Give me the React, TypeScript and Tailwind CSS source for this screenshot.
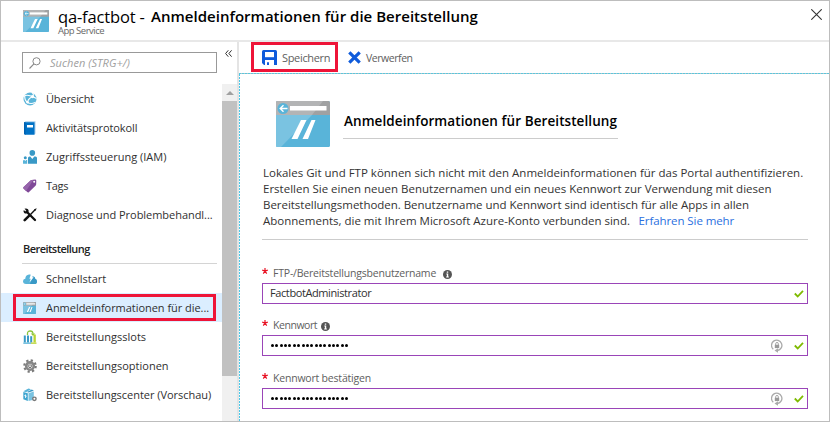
import type { ReactNode } from "react";

function WindowIcon({ className }: { className: string }) {
  return (
    <svg viewBox="0 0 54 46" preserveAspectRatio="none" className={className}>
      <rect width="54" height="46" rx="1.5" fill="#59b4d9" />
      <path d="M0 14V1.5Q0 0 1.5 0H52.5Q54 0 54 1.5V14Z" fill="#a0a1a2" />
      <path d="M0 14V1.5Q0 0 1.5 0H47L36 14Z" fill="#b3b4b5" />
      <path d="M0 14H36L5 46H1.5Q0 46 0 44.5Z" fill="#7ac3e1" />
      <rect x="14" y="5" width="36.500" height="4.500" fill="#fff" />
      <circle cx="7" cy="7.500" r="5.500" fill="#59b4d9" />
      <path d="M11.500 7.500H4.500M7.500 4.200L4.200 7.500L7.500 10.800" fill="none" stroke="#fff" strokeWidth="1.400" />
      <path d="M25 19H30.500L21.500 38H15.500ZM35.500 19H39.500L32 38H26.500Z" fill="#fff" />
    </svg>
  );
}

const GlobeIcon = () => (
  <svg viewBox="0 0 14 14" className="size-[14px]">
    <circle cx="7" cy="7" r="6.500" fill="#59b4d9" />
    <path d="M1 4.500C3 2 6 3.500 9.500 4.500M9.500 4.500C11 3 10.500 1.500 9 .8M9.500 4.500L13.500 6.500M9.500 4.500C6.500 6 4.500 8 4.500 11M4.500 10.500C2.500 9 1.500 7 1.800 4M4.500 10.500C7 12 10 11.500 12 10.500" fill="none" stroke="#fff" strokeWidth="1.100" />
    <circle cx="9.500" cy="4.600" r="1.600" fill="#fff" />
    <circle cx="4.600" cy="10.300" r="1.300" fill="#fff" />
  </svg>
);

const BookIcon = () => (
  <svg viewBox="0 0 14 14" className="size-[14px]">
    <path d="M1 1.500L2.500 .3H12.500V12.500L11.500 13.500Z" fill="#a8cdea" />
    <path d="M1 1.200H11.500V13.800H2L1 12.800Z" fill="#0072c6" />
    <path d="M1 1.200H2.500V13.800H2L1 12.800Z" fill="#0060b0" />
    <rect x="4" y="4" width="6" height="2.500" fill="#fff" />
  </svg>
);

const PeopleIcon = () => (
  <svg viewBox="0 0 14 14" className="size-[14px]">
    <circle cx="9.300" cy="2.900" r="2.800" fill="#3999c6" />
    <path d="M5 13.800V8Q5 6.500 6.500 6.500H7.300L9.300 9L11.300 6.500H12.500Q14 6.500 14 8V13.800Z" fill="#3999c6" />
    <circle cx="2.300" cy="7.700" r="1.500" fill="#3999c6" />
    <path d="M0 13.800V11Q0 10 1 10H1.400L2.300 11L3.200 10H4.200V13.800Z" fill="#59b4d9" />
  </svg>
);

const TagIcon = () => (
  <svg viewBox="0 0 14 14" className="size-[14px]">
    <path d="M.4 8.300L7.500 1.500Q8 1 9 .9L12 .5Q13.300 .5 13.300 1.800L13.200 5Q13.200 6 12.500 6.700L5.800 13.200Q5 13.800 4.200 13L.5 9.600Q0 9 .4 8.300Z" fill="#804998" />
    <path d="M.4 8.300L7.500 1.500Q8 1 9 .9L10.500 .7L3 11.900L.5 9.600Q0 9 .4 8.300Z" fill="#9664ab" />
    <circle cx="11.200" cy="2.800" r="1" fill="#fff" />
  </svg>
);

const ToolsIcon = () => (
  <svg viewBox="0 0 14 14" className="size-[14px]">
    <path d="M3.500 3.500L12 12" stroke="#111" strokeWidth="2.300" strokeLinecap="round" />
    <path d="M1.500 .8L3.500 2.700L2.700 3.700L.8 2Q0 4 1.300 5.100Q2.500 6 4 5.300L5.500 4Q6 2.500 5 1.300Q3.500 0 1.500 .8Z" fill="#111" />
    <path d="M12.300 1.500L7.500 6.500" stroke="#111" strokeWidth="1.300" />
    <path d="M6 7.800L1.700 12.200" stroke="#111" strokeWidth="2.500" strokeLinecap="round" />
    <path d="M11 1.800L13.200 .3L13.600 .8L12.200 3Z" fill="#111" />
  </svg>
);

const CloudIcon = () => (
  <svg viewBox="0 0 14 14" className="size-[14px]">
    <path d="M3 12Q0 11.800 0 9.300Q0 7 2.300 6.700Q2.500 3 6 2.500Q8.800 2 10 4.500Q12 4.500 12.200 6.800Q14 7.300 14 9.400Q13.900 12 11.200 12Z" fill="#59b4d9" />
    <path d="M10 4.500Q12 4.500 12.200 6.800Q14 7.300 14 9.400Q13.900 12 11.200 12H7Z" fill="#3999c6" />
    <path d="M8 2H10.300L9.200 5.200H10.600L6.500 10.500L7.700 6.700H6.400Z" fill="#fff" />
  </svg>
);

const SlotsIcon = () => (
  <svg viewBox="0 0 14 14" className="size-[14px]">
    <path d="M4.500 5V3.500Q4.500 1 7.200 1T10 3.800" fill="none" stroke="#8cc63e" strokeWidth="1.300" />
    <path d="M7.800 3.500H12.200L10 6Z" fill="#8cc63e" />
    <rect x=".8" y="5.500" width="2" height="7" fill="#3999c6" />
    <rect x="4" y="5.500" width="2" height="7" fill="#3999c6" />
    <rect x="7.200" y="6.200" width="2" height="6.300" fill="#3999c6" />
    <rect x="10.500" y="4.500" width="2.300" height="8" fill="#b8d432" />
    <path d="M.3 12.500H8V13.800H.3Z" fill="#59b4d9" />
    <path d="M8 12.500H13.500V13.800H8Z" fill="#b8d432" />
  </svg>
);

const GearIcon = () => (
  <svg viewBox="0 0 14 14" className="size-[14px]">
    <circle cx="7" cy="7" r="5.700" fill="none" stroke="#7a7a7a" strokeWidth="2.200" strokeDasharray="2.200 2.277" />
    <circle cx="7" cy="7" r="3.800" fill="none" stroke="#868686" strokeWidth="2.600" />
    <path d="M7 4V7.500M5.200 5.300Q4.300 8.500 7 8.800Q9.500 8.500 8.800 5.300" fill="none" stroke="#6f6f6f" strokeWidth="1" />
  </svg>
);

const CenterIcon = () => (
  <svg viewBox="0 0 14 14" className="size-[14px]">
    <path d="M.3 4L4.800 5.200V13L.3 11.200Z" fill="#3fa5d0" />
    <path d="M.3 3.300L5.500 .4L8 1.200L3 4.200Z" fill="#59b4d9" />
    <path d="M5.500 5.200L10.800 3.500V8.500L9.500 12L5.500 13Z" fill="#7ac3e1" />
    <path d="M5.500 4.500L10.800 2.800L8.900 1.500L4 4.100Z" fill="#3999c6" />
    <path d="M1.300 7.500L3.800 8.300M2.500 6.500V10" stroke="#fff" strokeWidth=".8" />
    <circle cx="11.400" cy="10.800" r="1.700" fill="#fff" stroke="#777" strokeWidth="1.400" />
  </svg>
);

function NavItem({ icon, label, selected, tracking = "" }: { icon: ReactNode; label: string; selected?: boolean; tracking?: string }) {
  return (
    <li className={`relative flex h-[29px] items-center gap-[9px] pl-[22px] ${selected ? "bg-[#dbeeff]" : ""}`}>
      <span className="flex size-[14px] shrink-0 items-center">{icon}</span>
      <span className={`text-[11px] leading-[16px] whitespace-nowrap text-[#303030] ${tracking}`}>{label}</span>
      {selected && <span className="absolute top-[1px] left-[12px] h-[27px] w-[203px] border-[3px] border-[#ee1438]" />}
    </li>
  );
}

const InfoIcon = () => (
  <svg viewBox="0 0 10 10" className="size-[9px]">
    <circle cx="5" cy="5" r="5" fill="#555" />
    <path d="M4.200 1.600H5.800V3H4.200ZM3.700 4H5.800V7.300H6.500V8.200H3.500V7.300H4.300V4.900H3.700Z" fill="#fff" />
  </svg>
);

const CheckIcon = () => (
  <svg viewBox="0 0 10 8" className="h-[8px] w-[10px]">
    <path d="M.8 3.500L3.700 6.500L9 .8" fill="none" stroke="#7fba00" strokeWidth="1.800" />
  </svg>
);

const ResetIcon = () => (
  <svg viewBox="0 0 12 14" className="h-[14px] w-[12px]">
    <path d="M2.300 10.300A5.200 5.200 0 1 1 6.500 11.500" fill="none" stroke="#aaa" strokeWidth="1.300" />
    <path d="M7 9.200V13.800L3.500 11.500Z" fill="#aaa" />
    <rect x="3.800" y="5.800" width="4.400" height="3.300" fill="#999" />
    <path d="M4.700 6V4.600Q4.700 3.500 6 3.500T7.300 4.600V6" fill="none" stroke="#999" strokeWidth=".9" />
  </svg>
);

function Field({ label, tracking, info, secret, className = "" }: { label: string; tracking: string; info?: string; secret?: boolean; className?: string }) {
  return (
    <div className={className}>
      <div className="flex h-[16px] items-center text-[10.5px] text-[#606060]">
        <svg viewBox="0 0 6 6" className="mb-[5px] size-[6px]">
          <path d="M3 0V3M3 3L.2 2.200M3 3L5.800 2.200M3 3L1.300 5.600M3 3L4.700 5.600" stroke="#e81123" strokeWidth="1.200" />
        </svg>
        <span className={`mt-px ml-[5px] whitespace-nowrap ${tracking}`}>{label}</span>
        {info && <span className={info}><InfoIcon /></span>}
      </div>
      <div className="mt-[2px] flex h-[21px] items-center border border-[#9a45b8] pr-[3px] pl-[8px]">
        {secret ? (
          <span className="flex items-center gap-[1.370px]">
            {Array.from({ length: 18 }, (_, i) => (
              <i key={i} className="size-[3px] rounded-full bg-black" />
            ))}
          </span>
        ) : (
          <span className="-ml-px text-[11px] tracking-[-0.400px] text-[#303030]">FactbotAdministrator</span>
        )}
        <span className="ml-auto flex items-center gap-[11px]">
          {secret && <ResetIcon />}
          <CheckIcon />
        </span>
      </div>
    </div>
  );
}

export default function App() {
  return (
    <div className="flex h-[422px] w-[830px] flex-col overflow-hidden border border-[#bdbdbd] bg-white font-['Open_Sans','Noto_Sans',sans-serif]">
      <header className="flex h-[41px] shrink-0 border-b-2 border-[#e8e8e8] pl-[22px]">
        <WindowIcon className="mt-[9px] h-[22px] w-[26px]" />
        <div className="ml-[9px] pt-[6px]">
          <h1 className="flex h-[18px] items-center leading-[17px] text-black whitespace-nowrap">
            <span className="w-[93px] text-[16.5px] font-medium tracking-[-0.150px] whitespace-pre">qa-factbot - </span>
            <span className="text-[15px] font-semibold tracking-[0.020px]">Anmeldeinformationen für die Bereitstellung</span>
          </h1>
          <p className="text-[9.5px] leading-[11px] tracking-[-0.5px] text-[#686868]">App Service</p>
        </div>
        <svg viewBox="0 0 11 11" className="mt-[8px] mr-[7px] ml-auto size-[11px]">
          <path d="M.3 .3L10.700 10.700M10.700 .3L.3 10.700" stroke="#333" strokeWidth="1.100" />
        </svg>
      </header>

      <div className="flex min-h-0 flex-1">
        <aside className="flex w-[238px] shrink-0 flex-col border-r-2 border-[#e4e4e4]">
          <div className="flex h-[42px] shrink-0 pt-[10px] pl-[21px]">
            <div className="flex h-[21px] w-[195px] items-center border border-[#999] pl-[6px]">
              <svg viewBox="0 0 12 12" className="size-[12px]">
                <circle cx="7.500" cy="4.300" r="3.600" fill="none" stroke="#888" strokeWidth="1" />
                <path d="M4.900 6.900L.5 11.500" stroke="#888" strokeWidth="1.100" />
              </svg>
              <span className="mt-px ml-[9px] text-[11px] tracking-[0.05px] text-[#a0a0a0] italic">Suchen (STRG+/)</span>
            </div>
            <svg viewBox="0 0 7 7" className="-mt-[2px] ml-[8px] size-[7px]">
              <path d="M3.300 .3L.6 3.500L3.300 6.700M6.600 .3L3.900 3.500L6.600 6.700" fill="none" stroke="#333" strokeWidth="1" />
            </svg>
          </div>

          <div className="flex min-h-0 flex-1">
            <nav className="w-[221px] shrink-0">
              <ul>
                <NavItem icon={<GlobeIcon />} label="Übersicht" tracking="tracking-[-0.150px]" />
                <NavItem icon={<BookIcon />} label="Aktivitätsprotokoll" tracking="tracking-[-0.100px]" />
                <NavItem icon={<PeopleIcon />} label="Zugriffssteuerung (IAM)" />
                <NavItem icon={<TagIcon />} label="Tags" tracking="tracking-[-0.300px]" />
                <NavItem icon={<ToolsIcon />} label="Diagnose und Problembehandl..." tracking="tracking-[-0.040px]" />
              </ul>
              <h2 className="mr-[5px] ml-[21px] flex h-[35px] items-center border-b border-[#d4d4d4] pt-[7px] pl-px text-[11px] font-semibold tracking-[-0.540px] text-[#222]">
                Bereitstellung
              </h2>
              <ul>
                <NavItem icon={<CloudIcon />} label="Schnellstart" />
                <NavItem icon={<WindowIcon className="h-[12px] w-[13px]" />} label="Anmeldeinformationen für die..." selected tracking="tracking-[-0.040px]" />
                <NavItem icon={<SlotsIcon />} label="Bereitstellungsslots" />
                <NavItem icon={<GearIcon />} label="Bereitstellungsoptionen" />
                <NavItem icon={<CenterIcon />} label="Bereitstellungscenter (Vorschau)" tracking="tracking-[-0.030px]" />
              </ul>
            </nav>
            <div className="flex w-[15px] shrink-0 flex-col bg-[#f0f0f0]">
              <div className="flex h-[17px] items-center justify-center">
                <svg viewBox="0 0 8 4" className="h-[4px] w-[8px]">
                  <path d="M4 0L8 4H0Z" fill="#a0a0a0" />
                </svg>
              </div>
              <div className="h-[275px] bg-[#c1c1c1]" />
            </div>
          </div>
        </aside>

        <main className="flex min-w-0 flex-1 flex-col">
          <div className="flex h-[31px] shrink-0 pl-[12px] text-[#606060]">
            <button className="flex h-[30px] w-[87px] items-center border-[3px] border-[#ee1438] pl-[8px]">
              <svg viewBox="0 0 15 15" className="size-[15px]">
                <path d="M0 1.500Q0 0 1.500 0H13.500Q15 0 15 1.500V15H2L0 13Z" fill="#0f5bdb" />
                <rect x="3" y="2" width="9" height="5.200" fill="#fff" />
                <path d="M3 10H12V15H7V12.300H5V15H3Z" fill="#fff" />
              </svg>
              <span className="mt-[2px] ml-[5px] text-[11px] tracking-[-0.330px]">Speichern</span>
            </button>
            <button className="ml-[10px] flex h-[30px] items-center">
              <svg viewBox="0 0 13 13" className="size-[13px]">
                <path d="M1.300 1.300L11.700 11.700M11.700 1.300L1.300 11.700" stroke="#0f5bdb" strokeWidth="3.200" />
              </svg>
              <span className="mt-[3px] ml-[5px] text-[10.5px] tracking-[-0.450px]">Verwerfen</span>
            </button>
          </div>

          <div className="h-px shrink-0 bg-[repeating-linear-gradient(90deg,#5cc6dc_0px,#5cc6dc_2px,#b4c4c8_2px,#b4c4c8_3px)]" />
          <div className="flex min-h-0 flex-1">
            <div className="w-px shrink-0 bg-[repeating-linear-gradient(180deg,#4cc8e8_0px,#4cc8e8_2px,#ffffff_2px,#ffffff_3px)]" />
            <section className="min-w-0 flex-1 pr-[21px] pl-[22px]">
              <div className="flex pt-[27px] pl-[14px]">
                <WindowIcon className="h-[46px] w-[54px]" />
                <h2 className="ml-[13px] flex h-[38px] w-[275px] items-center border-b border-[#ccc] pl-px text-[13.5px] font-semibold tracking-[0.080px] whitespace-nowrap text-black">
                  <span className="mt-[3px]">Anmeldeinformationen für Bereitstellung</span>
                </h2>
              </div>
              <div className="mt-[18px] h-[75px] border-b border-[#ccc] pl-px text-[11.5px] leading-[16px] whitespace-nowrap text-[#333]">
                <p>Lokales Git und FTP können sich nicht mit den Anmeldeinformationen für das Portal authentifizieren.</p>
                <p>Erstellen Sie einen neuen Benutzernamen und ein neues Kennwort zur Verwendung mit diesen</p>
                <p className="tracking-[-0.030px]">Bereitstellungsmethoden. Benutzername und Kennwort sind identisch für alle Apps in allen</p>
                <p>
                  Abonnements, die mit Ihrem Microsoft Azure-Konto verbunden sind.
                  <a className="ml-[8.5px] tracking-[-0.080px] text-[#2a6fe0]">Erfahren Sie mehr</a>
                </p>
              </div>
              <Field className="mt-[25px]" label="FTP-/Bereitstellungsbenutzername" tracking="tracking-[-0.200px]" info="ml-[7px] mt-[2px]" />
              <Field className="mt-[13px]" label="Kennwort" tracking="tracking-[-0.450px]" info="ml-[4px] mt-[2px]" secret />
              <Field className="mt-[14px]" label="Kennwort bestätigen" tracking="tracking-[-0.200px]" secret />
            </section>
          </div>
        </main>
      </div>
    </div>
  );
}
